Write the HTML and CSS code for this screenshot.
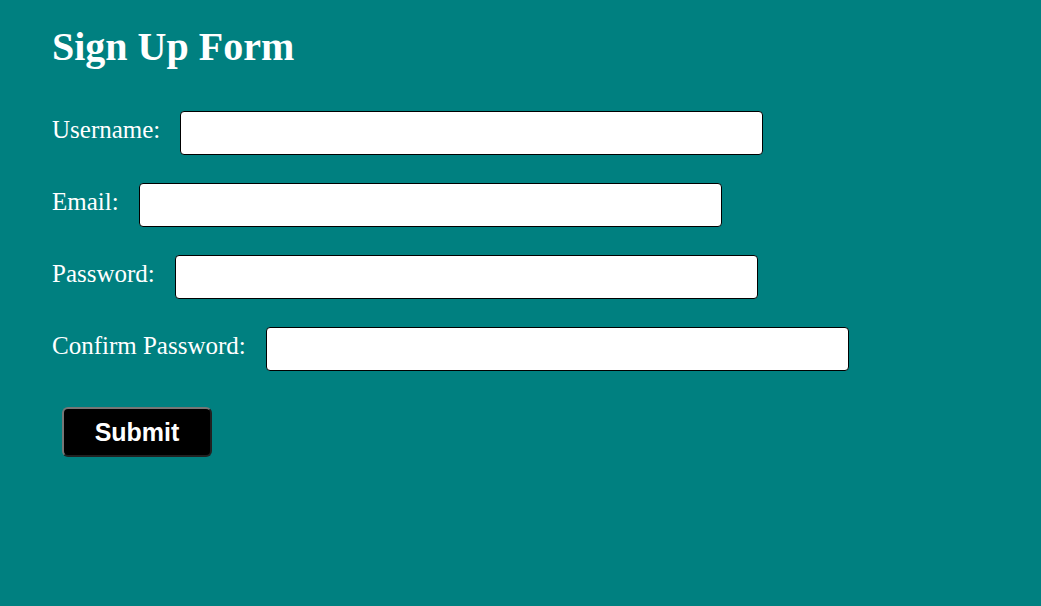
FILE: index.html
```html
<!DOCTYPE html>
<html lang="en">
<head>
<meta charset="utf-8">
<title>Sign Up Form</title>
<link rel="stylesheet" href="styles.css">
</head>
<body>
<main class="page">
  <h1 class="title">Sign Up Form</h1>
  <form class="form">
    <div class="row">
      <label class="label" for="username">Username:</label>
      <input class="field" type="text" id="username">
    </div>
    <div class="row">
      <label class="label" for="email">Email:</label>
      <input class="field" type="email" id="email">
    </div>
    <div class="row">
      <label class="label" for="password">Password:</label>
      <input class="field" type="password" id="password">
    </div>
    <div class="row">
      <label class="label" for="confirm">Confirm Password:</label>
      <input class="field" type="password" id="confirm">
    </div>
    <button class="submit" type="submit">Submit</button>
  </form>
</main>
</body>
</html>
```
FILE: styles.css
```css
html, body {
  margin: 0;
  padding: 0;
}
body {
  background: #008080;
  color: #ffffff;
  font-family: "Liberation Serif", "Times New Roman", serif;
  width: 1041px;
  height: 606px;
  overflow: hidden;
}
.page {
  padding: 0 52px;
}
.title {
  margin: 25px 0 42px;
  font-size: 40px;
  font-weight: bold;
  line-height: 44px;
}
.form {
  display: flex;
  flex-direction: column;
  align-items: flex-start;
}
.row {
  display: flex;
  align-items: flex-start;
  margin-bottom: 28px;
}
.label {
  font-size: 25px;
  line-height: 28px;
  margin-top: 5px;
  margin-right: 20px;
}
.field {
  box-sizing: border-box;
  width: 583px;
  height: 44px;
  margin: 0;
  border: 1px solid #000000;
  border-radius: 4px;
  background: #ffffff;
  font-size: 16px;
  padding: 0 8px;
}
.submit {
  margin: 8px 0 0 10px;
  box-sizing: border-box;
  width: 150px;
  height: 50px;
  background: #000000;
  color: #ffffff;
  border: 2px outset #767676;
  border-radius: 6px;
  font-family: "Liberation Sans", Arial, sans-serif;
  font-weight: bold;
  font-size: 25px;
  padding: 0;
}
```
